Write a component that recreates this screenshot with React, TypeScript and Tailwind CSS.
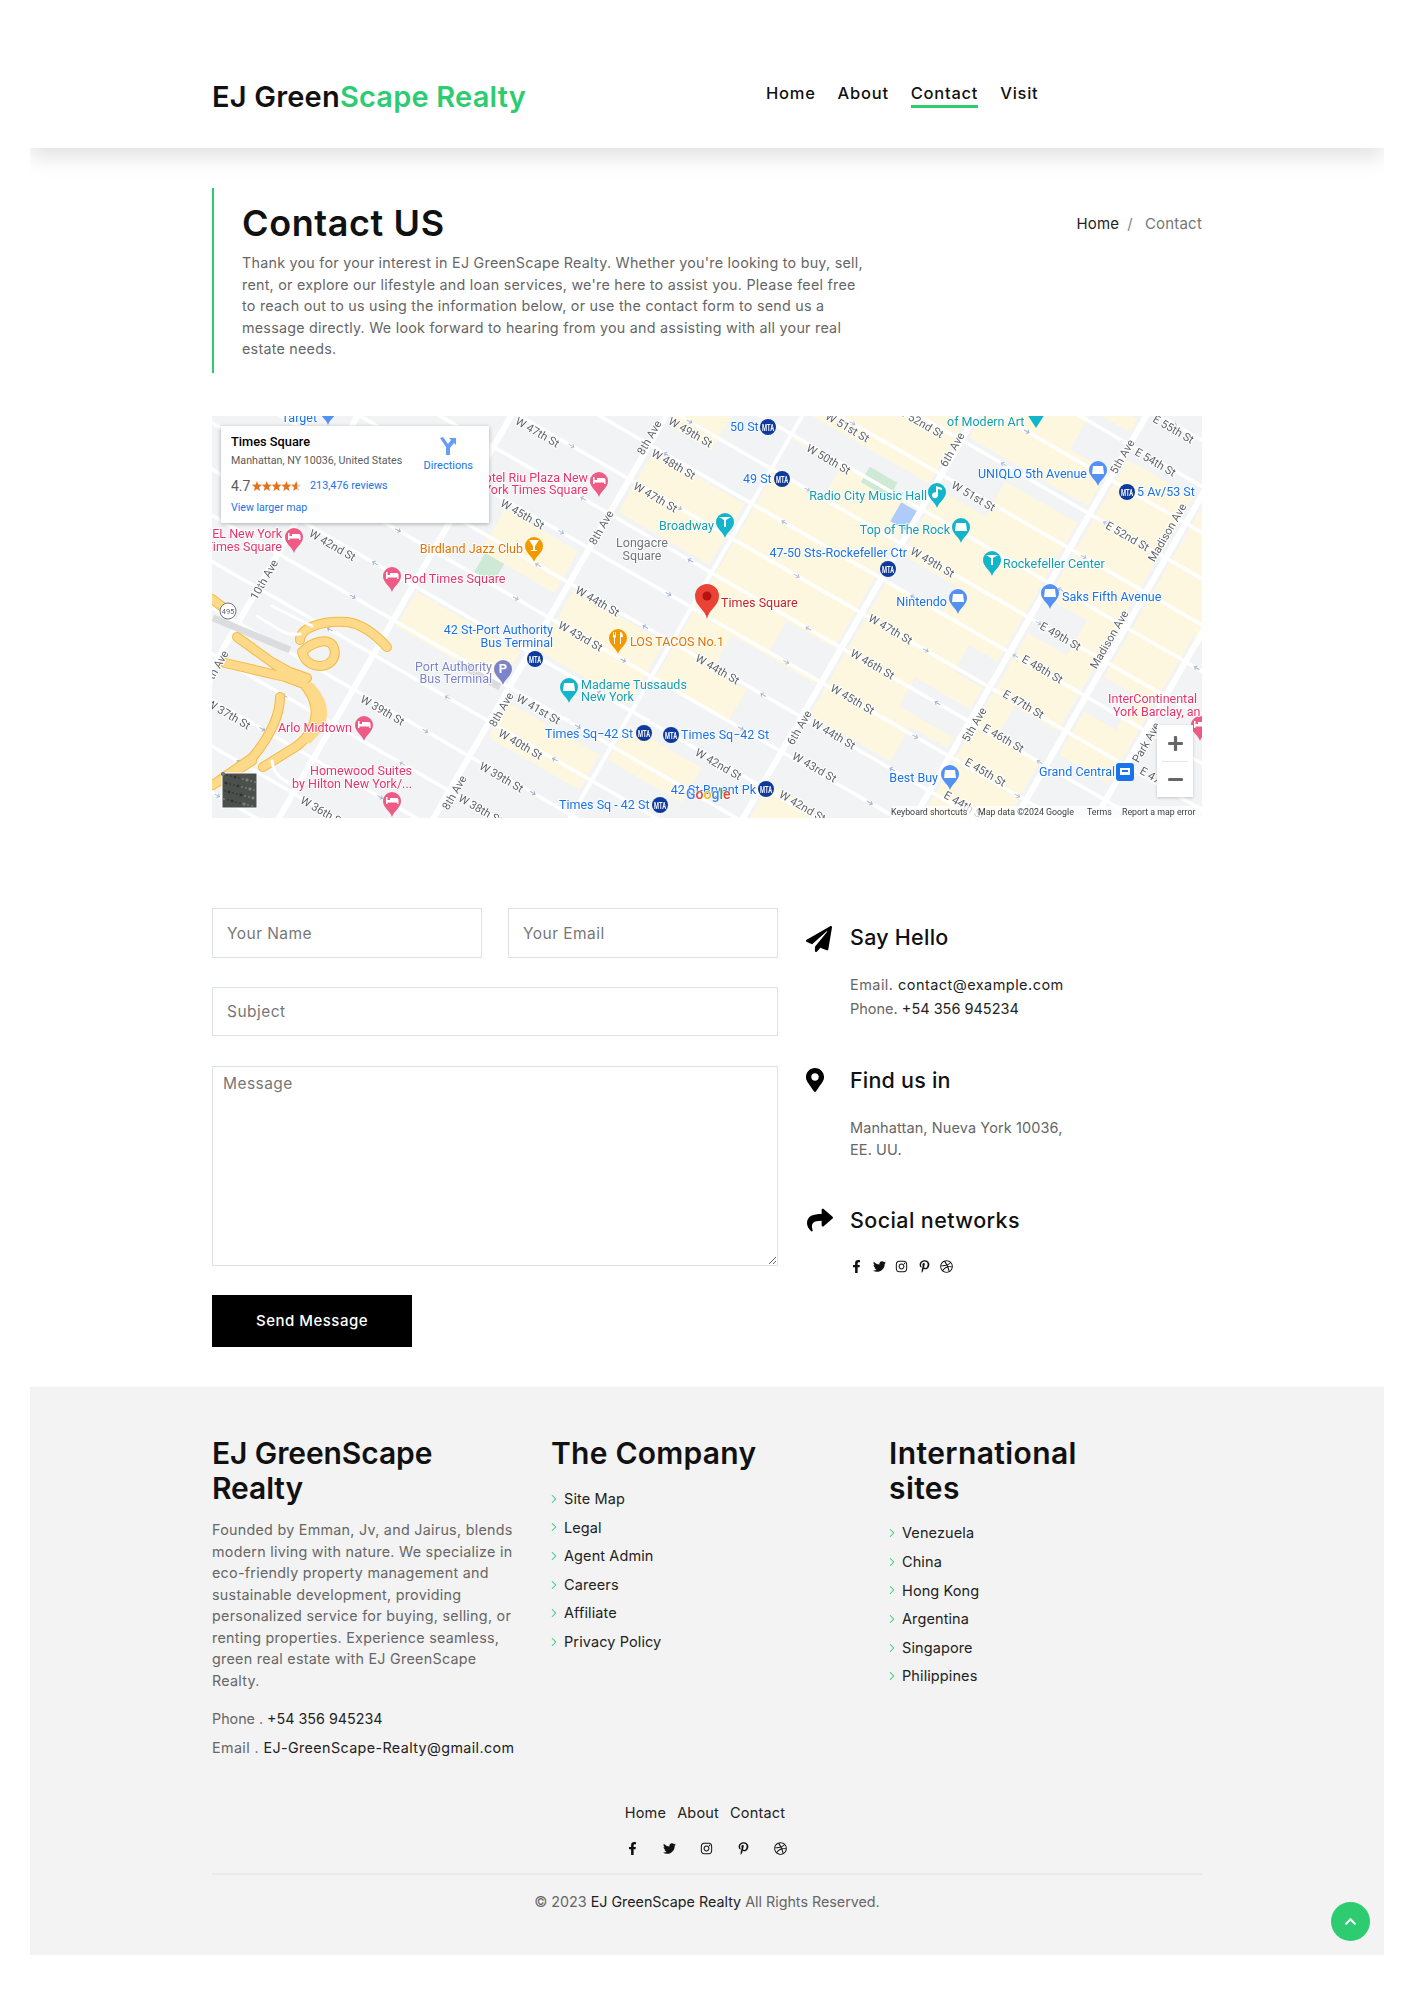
import { ChevronRight } from 'lucide-react';
import { FaPaperPlane, FaMapMarkerAlt, FaShare, FaFacebookF, FaTwitter, FaInstagram, FaPinterestP, FaDribbble, FaChevronUp, FaPlus, FaMinus } from 'react-icons/fa';

const AVENUES = [126, 259, 393, 511, 661, 809, 897, 966];
const STREET_KS = Array.from({ length: 24 }, (_, i) => i - 10);

// blocks in street-aligned coords: u from, u to, v from, v to
const BEIGE = [
  [300, 385, -66, -18], [400, 505, -30, 40], [400, 505, -190, -120], [515, 655, -275, -30],
  [515, 600, -30, 6], [667, 803, -340, -80], [667, 760, -80, -40], [815, 890, -420, -70],
  [815, 890, -70, 30], [903, 1060, -500, -300], [903, 960, -300, -130], [667, 803, -460, -360],
  [515, 655, -400, -300], [265, 385, 50, 90], [400, 505, 100, 140], [515, 600, 60, 100],
  [667, 720, 40, 80], [400, 450, -280, -220],
];

// grey cut-outs so the beige does not read as one solid band
const NOTCHES = [
  [515, 570, -270, -235], [600, 655, -110, -76], [740, 803, -125, -92], [667, 730, -225, -195],
  [815, 860, -260, -220], [840, 890, -150, -115], [515, 580, -400, -355], [760, 803, -445, -400],
  [560, 655, -70, -30], [667, 720, -340, -300], [903, 940, -220, -180], [770, 803, -180, -150],
];

const LABELS: [string, number, number, string, 'start' | 'end' | 'middle'][] = [
  ['Hotel Riu Plaza New', 376, 62, '#e8336d', 'end'], ['York Times Square', 376, 74, '#e8336d', 'end'],
  ['HOTEL New York', 70, 118, '#e8336d', 'end'], ['Times Square', 70, 131, '#e8336d', 'end'],
  ['Pod Times Square', 192, 163, '#e8336d', 'start'], ['Arlo Midtown', 140, 312, '#e8336d', 'end'],
  ['Homewood Suites', 200, 355, '#e8336d', 'end'], ['by Hilton New York/...', 200, 368, '#e8336d', 'end'],
  ['InterContinental', 985, 283, '#e8336d', 'end'], ['York Barclay, an', 901, 296, '#e8336d', 'start'],
  ['Birdland Jazz Club', 311, 133, '#e37400', 'end'], ['LOS TACOS No.1', 418, 226, '#e37400', 'start'],
  ['Longacre', 430, 127, '#70757a', 'middle'], ['Square', 430, 140, '#70757a', 'middle'],
  ['Broadway', 447, 110, '#129eaf', 'start'], ['Madame Tussauds', 369, 269, '#129eaf', 'start'],
  ['New York', 369, 281, '#129eaf', 'start'], ['of Modern Art', 735, 6, '#129eaf', 'start'],
  ['Radio City Music Hall', 715, 80, '#129eaf', 'end'], ['Top of The Rock', 738, 114, '#129eaf', 'end'],
  ['Rockefeller Center', 791, 148, '#129eaf', 'start'],
  ['42 St-Port Authority', 341, 214, '#1a73e8', 'end'], ['Bus Terminal', 341, 227, '#1a73e8', 'end'],
  ['Port Authority', 280, 251, '#7b83c9', 'end'], ['Bus Terminal', 280, 263, '#7b83c9', 'end'],
  ['Times Sq−42 St', 333, 318, '#1a73e8', 'start'], ['Times Sq−42 St', 469, 319, '#1a73e8', 'start'],
  ['Times Sq - 42 St', 347, 389, '#1a73e8', 'start'], ['42 St-Bryant Pk', 544, 374, '#1a73e8', 'end'],
  ['Target', 105, 2, '#1a73e8', 'end'], ['50 St', 518, 11, '#1a73e8', 'start'], ['49 St', 531, 63, '#1a73e8', 'start'],
  ['UNIQLO 5th Avenue', 875, 58, '#1a73e8', 'end'], ['5 Av/53 St', 925, 76, '#1a73e8', 'start'],
  ['47-50 Sts-Rockefeller Ctr', 695, 137, '#1a73e8', 'end'], ['Nintendo', 735, 186, '#1a73e8', 'end'],
  ['Saks Fifth Avenue', 850, 181, '#1a73e8', 'start'], ['Best Buy', 726, 362, '#1a73e8', 'end'],
  ['Grand Central', 903, 356, '#1a73e8', 'end'], ['Times Square', 509, 187, '#c5221f', 'start'],
];

const STREET_LABELS: [string, number, number][] = [
  ['W 47th St', 325, 17], ['W 49th St', 478, 17], ['W 48th St', 461, 49], ['W 47th St', 443, 82], ['W 45th St', 310, 99],
  ['W 44th St', 385, 186], ['W 43rd St', 368, 221], ['W 42nd St', 120, 130], ['W 41st St', 326, 294], ['W 40th St', 308, 329],
  ['W 39th St', 289, 362], ['W 38th St', 268, 394], ['W 39th St', 170, 295], ['W 37th St', 16, 299], ['W 36th St', 110, 396],
  ['W 51st St', 635, 12], ['W 50th St', 616, 44], ['W 52nd St', 708, 7], ['W 51st St', 761, 81], ['W 49th St', 720, 147],
  ['W 47th St', 678, 214], ['W 46th St', 660, 249], ['W 45th St', 640, 284], ['W 44th St', 621, 319], ['W 43rd St', 602, 352],
  ['W 44th St', 505, 254], ['W 42nd St', 506, 349], ['W 42nd St', 590, 391], ['E 55th St', 961, 14], ['E 54th St', 943, 47],
  ['E 52nd St', 915, 121], ['E 49th St', 848, 221], ['E 48th St', 830, 254], ['E 47th St', 811, 289], ['E 46th St', 791, 323],
  ['E 45th St', 773, 357], ['E 44th St', 752, 390], ['E 47', 938, 360],
];

const AVE_LABELS: [string, number, number][] = [
  ['8th Ave', 438, 22], ['8th Ave', 390, 112], ['8th Ave', 290, 294], ['8th Ave', 243, 377], ['10th Ave', 53, 164], ['9th Ave', 5, 252],
  ['6th Ave', 741, 34], ['6th Ave', 588, 312], ['5th Ave', 911, 41], ['5th Ave', 763, 309], ['Madison Ave', 956, 117],
  ['Madison Ave', 898, 224], ['Park Ave', 935, 327],
];

const PINS: [number, number, string, string][] = [
  [387, 81, '#ee5b85', 'bed'], [82, 137, '#ee5b85', 'bed'], [180, 176, '#ee5b85', 'bed'], [152, 325, '#ee5b85', 'bed'],
  [180, 401, '#ee5b85', 'bed'], [988, 325, '#ee5b85', 'bed'], [322, 146, '#f29900', 'glass'], [406, 238, '#f29900', 'fork'],
  [513, 122, '#12b5cb', 'tree'], [291, 269, '#7b83c9', 'p'], [357, 287, '#12b5cb', 'bag'], [725, 92, '#12b5cb', 'note'],
  [749, 127, '#12b5cb', 'bag'], [780, 160, '#12b5cb', 'tree'], [116, 9, '#5491f5', 'bag'], [886, 70, '#5491f5', 'bag'],
  [746, 198, '#5491f5', 'bag'], [838, 193, '#5491f5', 'bag'], [738, 374, '#5491f5', 'bag'],
];

const SUBWAY: [number, number][] = [
  [323, 243], [432, 317], [459, 319], [448, 389], [554, 373], [556, 11], [570, 63], [915, 76], [676, 153],
];

const RAMPS =
  'M0 183L12 192M88 224C88 212 110 204 135 206C150 208 165 220 175 231M25 221L65 250L90 266C108 285 110 310 85 330L51 351' +
  'M13 247L73 261L92 268M68 281C68 295 62 315 41 341L1 369M60 246L78 256L95 262M90 236C96 258 128 252 122 232C118 220 100 226 90 236M40 345L6 366';

function Pin({ x, y, color, kind }: { x: number; y: number; color: string; kind: string }) {
  return (
    <g transform={`translate(${x} ${y})`}>
      <path d="M0 0C-1.5-6-9-9-9-16A9 9 0 1 1 9-16C9-9 1.5-6 0 0Z" fill={color} />
      {kind === 'bed' && <path d="M-6-13V-20H-4.5V-17H-2V-19H5C6-19 6.5-18 6.5-17V-13H5V-14.500H-4.500V-13Z" fill="#fff" />}
      {kind === 'bag' && <path d="M-5-20H5L6-12H-6Z" fill="#fff" />}
      {kind === 'glass' && <path d="M-5-22H5L1-16V-12H3V-11H-3V-12H-1V-16Z" fill="#fff" />}
      {kind === 'fork' && <path d="M-5-22H-4V-19H-3V-22H-2V-17L-3-16V-10H-4V-16L-5-17ZM2-22C4-22 5-20 5-17H3V-10H2Z" fill="#fff" />}
      {kind === 'tree' && <path d="M-6-21H6L1-18V-11H-1V-18Z" fill="#fff" />}
      {kind === 'note' && <path d="M-1-22L5-20V-18L1-19V-13A3 3 0 1 1-1-15.500Z" fill="#fff" />}
      {kind === 'p' && <text x="0" y="-12" textAnchor="middle" fontSize="13" fontWeight="700" fill="#fff">P</text>}
    </g>
  );
}

function CityMap() {
  return (
    <svg width="990" height="402" viewBox="0 0 990 402" className="block" fontFamily="Roboto, sans-serif">
      <rect width="990" height="402" fill="#f1f3f4" />
      <g transform="rotate(30)">
        {BEIGE.map(([a, b, c, d], i) => (
          <rect key={i} x={a} y={c} width={b - a} height={d - c} fill="#fef7e0" />
        ))}
        {NOTCHES.map(([a, b, c, d], i) => (
          <rect key={i} x={a} y={c} width={b - a} height={d - c} fill="#f1f3f4" />
        ))}
        <rect x="305" y="-18" width="22" height="22" fill="#ceead6" />
        <rect x="595" y="-285" width="32" height="18" fill="#ceead6" />
        <rect x="480" y="-400" width="26" height="14" fill="#ceead6" />
        <rect x="640" y="-270" width="18" height="22" fill="#aecbfa" />
        {STREET_KS.map(k => (
          <line key={k} x1="-400" x2="1300" y1={-154 + 40 * k} y2={-154 + 40 * k} stroke="#fff" strokeWidth="3.500" />
        ))}
        {AVENUES.map(u => (
          <line key={u} x1={u} x2={u} y1="-700" y2="600" stroke="#fff" strokeWidth={u === 511 ? 4 : 6} />
        ))}
        {/* one-way arrows */}
        {STREET_KS.map(k =>
          [190, 326, 450, 586, 735, 853, 1010].map((u, i) => (
            <path
              key={`${k}-${u}`}
              transform={`translate(${u + ((k * 37) % 40)} ${-154 + 40 * k}) scale(${k % 2 ? 1 : -1} 1)`}
              d="M-3 0H3M-0.500-2L-3 0L-0.500 2"
              fill="none"
              stroke={i % 2 ? '#b3bfd9' : '#a9b6d3'}
              strokeWidth="1"
            />
          ))
        )}
      </g>
      <path d="M1 202L78 234M245 247L288 271" fill="none" stroke="#dadce0" strokeWidth="7" />
      {/* highway ramps */}
      <g fill="none" strokeLinecap="round" strokeLinejoin="round">
        <path d={RAMPS} stroke="#f5b942" strokeWidth="10" />
        <path d={RAMPS} stroke="#fdd98a" strokeWidth="8" />
        <path d="M98 272C114 290 114 305 96 322" stroke="#fdd98a" strokeWidth="11" />
        <path d="M45 200C70 215 72 220 88 218M100 210L60 190M60 345C62 360 70 365 90 372" stroke="#fff" strokeWidth="3" />
      </g>
      <circle cx="16" cy="195" r="8" fill="#fff" stroke="#70757a" />
      <text x="16" y="198" textAnchor="middle" fontSize="7.500" fill="#5f6368">495</text>
      <g fill="#5f6368" fontSize="11.300">
        {STREET_LABELS.map(([t, x, y], i) => (
          <text key={i} x={x} y={y + 3} textAnchor="middle" transform={`rotate(30 ${x} ${y})`} stroke="#fff" strokeWidth="2" paintOrder="stroke">{t}</text>
        ))}
        {AVE_LABELS.map(([t, x, y], i) => (
          <text key={i} x={x} y={y + 3} textAnchor="middle" transform={`rotate(-60 ${x} ${y})`} stroke="#fff" strokeWidth="2" paintOrder="stroke">{t}</text>
        ))}
      </g>
      {PINS.map(([x, y, c, k], i) => <Pin key={i} x={x} y={y} color={c} kind={k} />)}
      <path d="M824 12L815-2H833Z" fill="#12b5cb" />
      {SUBWAY.map(([x, y], i) => (
        <g key={i}>
          <circle cx={x} cy={y} r="8" fill="#0d3a9c" />
          <text x={x} y={y + 3.500} textAnchor="middle" fontSize="9" fontWeight="700" fill="#fff" textLength="12" lengthAdjust="spacingAndGlyphs">MTA</text>
        </g>
      ))}
      <rect x="904" y="347" width="18" height="18" rx="3" fill="#1a73e8" />
      <path d="M908 352H918V359H908ZM910 354V356H916V354Z" fill="#fff" fillRule="evenodd" />
      <g fontSize="12.500" stroke="#fff" strokeWidth="1.500" paintOrder="stroke">
        {LABELS.map(([t, x, y, c, a], i) => (
          <text key={i} x={x} y={y + 4} textAnchor={a} fill={c}>{t}</text>
        ))}
      </g>
      <path d="M495 203C493 193 483 190 483 180A12 12 0 1 1 507 180C507 190 497 193 495 203Z" fill="#ea4335" />
      <circle cx="495" cy="180" r="4.500" fill="#b31412" />
      <text x="474" y="383" fontSize="14" fontWeight="500" stroke="#fff" strokeWidth="1" paintOrder="stroke">
        <tspan fill="#4285f4">G</tspan><tspan fill="#ea4335">o</tspan><tspan fill="#fbbc04">o</tspan><tspan fill="#4285f4">g</tspan><tspan fill="#34a853">l</tspan><tspan fill="#ea4335">e</tspan>
      </text>
      <rect x="10" y="357" width="35" height="35" fill="#4b504c" stroke="#fff" strokeWidth="1" />
      {Array.from({ length: 70 }, (_, i) => (
        <circle key={i} cx={11 + ((i * 17) % 33)} cy={358 + ((i * 29) % 33)} r={i % 3 === 0 ? 1.800 : 1} fill={i % 2 ? '#2d312e' : '#7a807a'} />
      ))}
      <rect x="680" y="390" width="310" height="12" fill="#fff" fillOpacity="0.7" />
      <g fontSize="8.800" fill="#3c4043">
        <text x="679" y="399">Keyboard shortcuts</text>
        <text x="766" y="399">Map data ©2024 Google</text>
        <text x="875" y="399">Terms</text>
        <text x="910" y="399">Report a map error</text>
      </g>
    </svg>
  );
}

function Socials({ className }: { className: string }) {
  return (
    <div className={className}>
      <FaFacebookF />
      <FaTwitter />
      <FaInstagram />
      <FaPinterestP />
      <FaDribbble />
    </div>
  );
}

function FooterList({ items, className }: { items: string[]; className: string }) {
  return (
    <ul className={className}>
      {items.map(item => (
        <li key={item} className="flex items-center h-[28.6px] text-[#222] text-[14.500px] tracking-[0.1px]">
          <ChevronRight size={14} strokeWidth={1.800} className="text-[#2ecc71] -ml-[4px] mr-[3px] shrink-0" />
          {item}
        </li>
      ))}
    </ul>
  );
}

export default function App() {
  const fieldClass = 'border border-[#dfe2e6] px-[14px] text-[15.500px] tracking-[0.45px] text-[#222] placeholder:text-[#777] outline-none bg-white';
  const footerHeading = 'text-[30px] font-semibold leading-[34.500px] text-[#111]';

  return (
    <div className="min-h-[2000px] bg-white" style={{ fontFamily: "Inter, 'Noto Sans', sans-serif" }}>
      <div className="mx-[30px] overflow-x-clip">
        {/* Header */}
        <header className="h-[148px] relative shadow-[0_8px_22px_rgba(0,0,0,0.13)] bg-white">
          <div className="w-[990px] mx-auto flex h-full">
            <a className="text-[29px] font-semibold tracking-[0.2px] text-[#111] mt-[76px] leading-[42px]">
              EJ Green<span className="text-[#2ecc71]">Scape Realty</span>
            </a>
            <nav className="absolute left-[736px] top-[81px] flex gap-[22px] text-[16.500px] font-medium tracking-[0.75px] text-[#111] leading-[24px]">
              <a>Home</a>
              <a>About</a>
              <a className="border-b-[3px] border-[#2ecc71] h-[27px]">Contact</a>
              <a>Visit</a>
            </nav>
          </div>
        </header>

        <main className="w-[990px] mx-auto pt-[40px]">
          {/* Title block */}
          <section className="border-l-2 border-[#2ecc71] h-[185px] pl-[28px] flex justify-between">
            <div className="w-[620px]">
              <h1 className="text-[36px] font-semibold text-[#111] leading-[44px] mt-[13px] tracking-[0.6px]">Contact US</h1>
              <p className="text-[14.300px] tracking-[0.25px] leading-[21.500px] text-[#666] mt-[7px] whitespace-nowrap">
                Thank you for your interest in EJ GreenScape Realty. Whether you're looking to buy, sell,<br />
                rent, or explore our lifestyle and loan services, we're here to assist you. Please feel free<br />
                to reach out to us using the information below, or use the contact form to send us a<br />
                message directly. We look forward to hearing from you and assisting with all your real<br />
                estate needs.
              </p>
            </div>
            <div className="text-[15px] tracking-[0.2px] mt-[25px] leading-[22px] flex">
              <span className="text-[#222]">Home</span>
              <span className="text-[#888] mx-[8px]">/</span>
              <span className="text-[#777] ml-[4px]">Contact</span>
            </div>
          </section>

          {/* Map */}
          <div className="relative mt-[43px] h-[402px] overflow-hidden">
            <div className="blur-[0.35px]"><CityMap /></div>
            <div className="absolute left-[9px] top-[10px] w-[268px] h-[97px] bg-white shadow-[0_1px_4px_rgba(0,0,0,0.3)] flex justify-between pl-[10px] pr-[16px] pt-[7px]" style={{ fontFamily: 'Roboto, sans-serif' }}>
              <div>
                <div className="text-[12.800px] font-medium leading-[18px] text-black">Times Square</div>
                <div className="text-[10.700px] text-[#5b5b5b] leading-[14px] mt-[3px]">Manhattan, NY 10036, United States</div>
                <div className="flex items-center mt-[8px] h-[20px]">
                  <span className="text-[14px] text-[#5b5b5b] w-[21px]">4.7</span>
                  <svg width="49" height="11" viewBox="0 0 49 11">
                    <defs>
                      <linearGradient id="half-star">
                        <stop offset="55%" stopColor="#e7711b" />
                        <stop offset="55%" stopColor="#d0d0d0" />
                      </linearGradient>
                    </defs>
                    {[0, 1, 2, 3, 4].map(i => (
                      <polygon
                        key={i}
                        transform={`translate(${i * 9.800} 0)`}
                        points="5,0 6.300,3.600 10,3.800 7.100,6.200 8.100,10 5,7.900 1.900,10 2.900,6.200 0,3.800 3.700,3.600"
                        fill={i === 4 ? 'url(#half-star)' : '#e7711b'}
                      />
                    ))}
                  </svg>
                  <span className="text-[10.800px] text-[#1a73e8] ml-[9px]">213,476 reviews</span>
                </div>
                <div className="text-[10.600px] text-[#1a73e8] mt-[5px] leading-[14px]">View larger map</div>
              </div>
              <div className="flex flex-col items-center pt-[4px]">
                <svg width="18" height="18" viewBox="0 0 18 18" fill="#669df6">
                  <path d="M1 1L4 0L9 7L12 3L10 1H17V8L15 6L11 11V18H7V10Z" />
                </svg>
                <span className="text-[11px] text-[#1a73e8] mt-[4px] leading-[14px]">Directions</span>
              </div>
            </div>
            <div className="absolute left-[945px] top-[309px] w-[36px] h-[72px] bg-white shadow-[0_1px_3px_rgba(0,0,0,0.2)] flex flex-col items-center text-[#666]">
              <div className="h-[36px] flex items-center justify-center"><FaPlus className="text-[17px]" /></div>
              <div className="w-[26px] border-t border-[#e6e6e6]" />
              <div className="h-[35px] flex items-center justify-center"><FaMinus className="text-[17px]" /></div>
            </div>
          </div>

          {/* Form and contact details */}
          <section className="mt-[90px] flex">
            <form className="w-[566px]">
              <div className="flex gap-[26px]">
                <input placeholder="Your Name" className={`${fieldClass} w-[270px] h-[50px]`} />
                <input placeholder="Your Email" className={`${fieldClass} w-[270px] h-[50px]`} />
              </div>
              <input placeholder="Subject" className={`${fieldClass} w-full h-[49px] mt-[29px] block`} />
              <textarea placeholder="Message" className={`${fieldClass} w-full h-[200px] mt-[30px] block !px-[10px] py-[5px]`} />
              <button type="button" className="w-[200px] h-[52px] mt-[29px] bg-black text-white text-[15px] font-medium tracking-[0.5px] block">
                Send Message
              </button>
            </form>
            <div className="ml-[28px]">
              <div className="flex">
                <FaPaperPlane className="text-[26px] mt-[18px] w-[44px] pr-[18px]" />
                <div>
                  <h3 className="text-[21.500px] font-medium tracking-[0.25px] leading-[30px] mt-[14px] text-[#111]">Say Hello</h3>
                  <p className="text-[14.500px] tracking-[0.45px] text-[#666] leading-[24px] mt-[21px]">Email. <span className="text-[#222]">contact@example.com</span></p>
                  <p className="text-[14.500px] text-[#666] leading-[24px]">Phone. <span className="text-[#222]">+54 356 945234</span></p>
                </div>
              </div>
              <div className="flex mt-[44px]">
                <FaMapMarkerAlt className="text-[26px] w-[44px] pr-[26px] mt-[2px]" />
                <div>
                  <h3 className="text-[21.500px] font-medium tracking-[0.2px] leading-[30px] text-[#111]">Find us in</h3>
                  <p className="text-[14.500px] tracking-[0.1px] text-[#666] leading-[21.500px] mt-[22px]">Manhattan, Nueva York 10036,<br />EE. UU.</p>
                </div>
              </div>
              <div className="flex mt-[45px]">
                <FaShare className="text-[26px] w-[44px] pr-[16px] mt-[2px]" />
                <div>
                  <h3 className="text-[21.500px] font-medium tracking-[0.4px] leading-[30px] text-[#111]">Social networks</h3>
                  <Socials className="flex gap-[9.500px] items-center text-[13px] text-[#111] mt-[25px]" />
                </div>
              </div>
            </div>
          </section>
        </main>

        {/* Footer */}
        <footer className="relative bg-[#f3f3f3] mt-[40px] h-[568px] pt-[49px]">
          <div className="w-[990px] mx-auto">
            <div className="grid grid-cols-[339px_338px_313px]">
              <div className="w-[306px]">
                <h2 className={`${footerHeading} tracking-[-0.1px]`}>EJ GreenScape Realty</h2>
                <p className="text-[14.300px] tracking-[0.28px] leading-[21.500px] text-[#666] mt-[14px] whitespace-nowrap">
                  Founded by Emman, Jv, and Jairus, blends<br />
                  modern living with nature. We specialize in<br />
                  eco-friendly property management and<br />
                  sustainable development, providing<br />
                  personalized service for buying, selling, or<br />
                  renting properties. Experience seamless,<br />
                  green real estate with EJ GreenScape<br />
                  Realty.
                </p>
                <p className="text-[14.300px] leading-[28.600px] text-[#666] mt-[14px]">Phone . <span className="text-[#222]">+54 356 945234</span></p>
                <p className="text-[14.300px] tracking-[0.4px] leading-[28.600px] text-[#666] whitespace-nowrap">Email . <span className="text-[#222]">EJ-GreenScape-Realty@gmail.com</span></p>
              </div>
              <div>
                <h2 className={`${footerHeading} tracking-[0.25px]`}>The Company</h2>
                <FooterList className="mt-[14px]" items={['Site Map', 'Legal', 'Agent Admin', 'Careers', 'Affiliate', 'Privacy Policy']} />
              </div>
              <div>
                <h2 className={`${footerHeading} tracking-[0.4px]`}>International<br />sites</h2>
                <FooterList className="mt-[14px]" items={['Venezuela', 'China', 'Hong Kong', 'Argentina', 'Singapore', 'Philippines']} />
              </div>
            </div>
            <div className="flex justify-center gap-[11px] text-[14.500px] tracking-[0.2px] leading-[24px] text-[#222] mt-[39px] pr-[4px]">
              <a>Home</a>
              <a>About</a>
              <a>Contact</a>
            </div>
            <Socials className="flex justify-center gap-[24px] items-center text-[13px] text-[#111] mt-[13px] h-[20px] pr-[2px]" />
            <div className="border-t-2 border-[#e9e9e9] mt-[15px]" />
            <p className="text-center text-[14.300px] leading-[24px] text-[#666] mt-[15px]">
              © 2023 <span className="text-[#222]">EJ GreenScape Realty</span> All Rights Reserved.
            </p>
          </div>
          <button type="button" className="absolute left-[1301px] top-[515px] w-[39px] h-[39px] rounded-full bg-[#2ecc71] text-white flex items-center justify-center">
            <FaChevronUp className="text-[13px]" />
          </button>
        </footer>
      </div>
    </div>
  );
}
